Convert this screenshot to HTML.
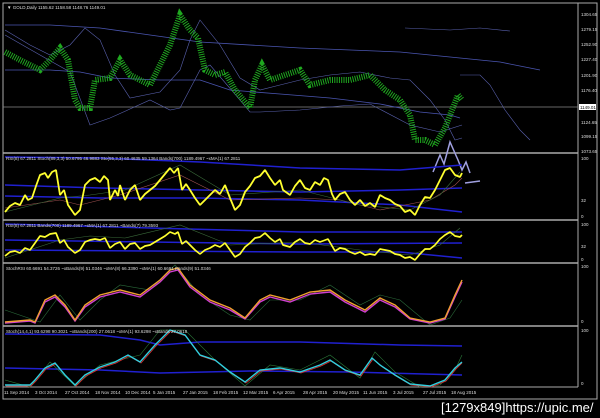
<!DOCTYPE html>
<html><head><style>
html,body{margin:0;padding:0;background:#000;}
body{width:600px;height:418px;overflow:hidden;position:relative;font-family:"Liberation Sans",sans-serif;}
svg{position:absolute;left:0;top:0}
.cap{position:absolute;left:441px;top:400px;color:#fff;font-size:13px;font-family:"Liberation Sans",sans-serif;letter-spacing:0}
</style></head><body>
<svg width="600" height="418" viewBox="0 0 600 418">
<g fill="none">
<rect x="3" y="3" width="594" height="396" stroke="#aaa" stroke-width="1"/>
<line x1="578" y1="3" x2="578" y2="387" stroke="#aaa"/>
<line x1="3" y1="153" x2="578" y2="153" stroke="#aaa" stroke-width="1.5"/>
<line x1="3" y1="220" x2="578" y2="220" stroke="#aaa" stroke-width="1.5"/>
<line x1="3" y1="263" x2="578" y2="263" stroke="#aaa" stroke-width="1.5"/>
<line x1="3" y1="326" x2="578" y2="326" stroke="#aaa" stroke-width="1.5"/>
<line x1="3" y1="387" x2="578" y2="387" stroke="#aaa"/>
<line x1="3" y1="107" x2="578" y2="107" stroke="#888" stroke-width="0.7"/>
<polyline stroke="#4a55b0" stroke-width="0.8" points="5,25 50,25 100,28 150,35 200,42 300,48 400,52 460,58 500,62 540,70"/>
<polyline stroke="#4a55b0" stroke-width="0.8" points="5,70 50,70 80,72 110,78 160,80 200,80 230,90 280,94 330,98 380,104 420,112 450,115 460,118"/>
<polyline stroke="#5a62b0" stroke-width="0.6" points="5,30 30,45 50,55 70,45 85,28 100,40 115,75 130,98 160,92 180,70 190,40 200,20 220,45 240,78 260,90 280,85 300,80 330,75 360,72 390,78 410,80 430,100 445,120 455,140 462,138"/>
<polyline stroke="#5a62b0" stroke-width="0.6" points="5,35 40,55 70,72 90,125 110,118 150,100 170,110 180,108 200,70 210,65 240,100 250,112 260,112 300,110 340,106 370,104 410,125 440,132 462,125"/>
<polyline stroke="#5a62b0" stroke-width="0.6" points="460,75 480,75 490,85 505,110 520,130 530,140"/>
<polyline stroke="#5a62b0" stroke-width="0.6" points="405,28 450,30 480,28 510,31"/>
<polyline stroke="#1fa81f" stroke-width="6" stroke-dasharray="1 1.3" points="5,52 20,60 40,70 50,60 60,48 68,60 75,100 80,108 90,108 95,80 110,78 120,60 130,75 140,80 150,85 160,65 170,45 180,15 190,30 198,38 205,70 215,75 225,72 235,90 245,102 250,108 255,80 262,65 270,80 285,75 300,70 310,85 330,80 350,80 370,75 385,90 400,100 410,115 415,140 425,140 435,145 445,128 452,110 458,95 462,100"/>
<polyline stroke="#a0a0e0" stroke-width="1.5" points="433,172 440,155 444,164 450,142 458,160 462,170 466,162 470,173"/>
<polyline stroke="#a0a0e0" stroke-width="1.5" points="465,183 480,181"/>
<polyline stroke="#2020d0" stroke-width="1.5" points="5,157 100,158 200,162 300,168 400,170 462,165"/>
<polyline stroke="#2020d0" stroke-width="1.5" points="5,185 100,188 200,190 300,192 400,190 462,188"/>
<polyline stroke="#2020d0" stroke-width="1.5" points="5,196 100,198 200,198 300,200 400,205 462,212"/>
<polyline stroke="#a05050" stroke-width="0.6" points="5,208 60,200 80,205 120,195 180,175 230,200 300,198 340,200 380,210 430,200 455,185 462,178"/>
<polyline stroke="#3a6a3a" stroke-width="0.6" points="5,212 60,198 90,195 125,190 180,165 230,195 300,190 360,205 410,210 440,195 460,172"/>
<polyline stroke="#ffff30" stroke-width="1.8" stroke-linejoin="bevel" points="5,212 10,206 15,203 20,205 25,195 28,200 32,198 36,186 40,175 45,173 48,178 52,172 56,170 60,195 64,190 68,205 75,215 80,210 85,185 90,180 95,178 100,182 104,176 108,180 110,200 115,190 118,196 120,185 125,200 130,190 135,185 140,200 145,194 150,190 155,186 160,180 165,174 170,168 174,173 178,168 182,190 186,184 190,190 195,198 200,205 205,200 210,195 215,190 220,194 225,185 230,198 235,210 240,205 245,192 250,186 255,178 260,176 265,170 270,178 275,185 280,180 283,190 290,195 295,186 300,180 305,188 310,190 315,182 320,185 324,178 328,180 332,194 335,200 340,194 345,192 350,200 355,205 360,200 365,206 370,203 375,207 380,195 385,198 390,200 395,204 400,206 405,212 410,210 415,215 420,205 425,197 430,198 435,190 440,180 445,170 450,168 455,175 460,177 462,173"/>
<polyline stroke="#2020d0" stroke-width="1.5" points="5,224 150,228 300,232 462,232"/>
<polyline stroke="#2020d0" stroke-width="1.5" points="5,240 150,242 300,244 462,243"/>
<polyline stroke="#2020d0" stroke-width="1.5" points="5,250 150,251 300,252 400,252 462,258"/>
<polyline stroke="#3a6a3a" stroke-width="0.6" points="5,258 60,240 90,236 125,238 180,225 230,245 300,242 360,250 410,255 440,245 460,228"/>
<polyline stroke="#ffff30" stroke-width="1.7" stroke-linejoin="bevel" points="5,256 10,252 15,251 20,253 25,248 30,250 35,243 40,236 45,237 50,234 56,233 60,243 64,240 68,247 75,253 80,250 85,242 90,240 95,239 100,240 105,238 110,248 115,244 120,242 125,249 130,244 135,243 140,249 145,246 150,245 155,242 160,239 165,236 170,232 175,234 178,232 182,244 186,241 190,245 195,250 200,254 205,250 210,248 215,245 220,247 225,243 230,250 235,257 240,254 245,247 250,243 255,238 260,237 265,233 270,238 275,242 280,239 283,245 290,247 295,242 300,239 305,243 310,244 315,240 320,242 328,239 335,251 340,248 345,249 350,252 355,254 360,252 365,255 370,254 375,255 380,249 385,250 390,251 395,254 400,255 405,258 410,257 415,260 420,254 425,249 430,249 435,245 440,239 445,235 450,232 455,236 460,237 462,235"/>
<polyline stroke="#2a6a3a" stroke-width="0.6" points="5,310 40,322 60,295 80,320 100,300 120,285 150,290 175,265 200,295 230,315 250,320 270,300 300,300 330,285 360,305 380,295 400,300 430,325 450,318 462,300"/>
<polyline stroke="#d040d0" stroke-width="1.4" points="5,323 30,321 35,323 45,302 55,297 65,307 75,321 85,307 100,297 120,292 140,297 160,282 170,272 178,270 190,287 210,302 230,310 245,319 260,302 270,297 290,302 310,294 330,292 345,302 355,307 365,312 380,300 395,307 410,319 430,323 445,319 455,297 462,282"/>
<polyline stroke="#f0a030" stroke-width="1.4" points="5,322 30,320 35,322 45,300 55,295 65,305 75,320 85,305 100,295 120,290 140,295 160,280 170,270 178,268 190,285 210,300 230,308 245,318 260,300 270,295 290,300 310,292 330,290 345,300 355,305 365,310 380,298 395,305 410,318 430,322 445,318 455,295 462,280"/>
<polyline stroke="#2020d0" stroke-width="1.5" points="5,334 100,335 140,340 160,345 200,342 300,342 400,345 462,346"/>
<polyline stroke="#2020d0" stroke-width="1.5" points="5,368 100,370 160,373 250,371 350,372 462,375"/>
<polyline stroke="#2a7a3a" stroke-width="0.6" points="5,380 30,387 50,362 75,386 100,365 140,355 160,330 185,330 215,360 245,386 270,365 300,370 330,355 360,378 375,352 395,372 420,387 440,385 455,370 462,355"/>
<polyline stroke="#e03030" stroke-width="0.8" points="6,386 31,386 36,381 46,369 56,364 66,376 76,386 86,376 101,368 116,363 129,356 141,363 156,346 171,331 186,336 201,356 216,361 231,373 246,383 261,371 281,369 301,373 321,366 331,361 346,371 361,376 373,359 381,366 396,376 411,385 431,387 446,381 456,369 462,363"/>
<polyline stroke="#30d0e0" stroke-width="1.4" points="5,385 30,385 35,380 45,368 55,363 65,375 75,385 85,375 100,367 115,362 128,355 140,362 155,345 170,330 185,335 200,355 215,360 230,372 245,382 260,370 280,368 300,372 320,365 330,360 345,370 360,375 372,358 380,365 395,375 410,384 430,386 445,380 455,368 462,362"/>
</g>
<g fill="#ddd" font-size="4.5" font-family="Liberation Sans, sans-serif">
<text x="7" y="9">▼ GOLD,Daily  1155.62 1158.58 1148.76 1149.01</text>
<text x="6" y="160">RSI(8) 67.2811  Stoch(89,3,3) 50.6795 46.9883  Sto(55,3,3) 60.4635 59.1364  Bands(700) 1189.4967  ~xMA(1) 67.2811</text>
<text x="6" y="227">RSI(8) 67.2811  Bands(700) 1189.4967  ~xMA(1) 67.2811  ~Bands(7) 79.3593</text>
<text x="6" y="270">StochRSI 60.6691 54.3726  ~xBands(9) 51.0346  ~xMA(8) 66.3390  ~xMA(1) 60.6691  Bands(9) 51.0346</text>
<text x="6" y="333">Stoch(14,4,1) 93.6298 90.3021  ~xBands(200) 27.0618  ~xMA(1) 93.6298  ~xBands 27.0618</text>
<text x="581" y="16">1304.65</text><text x="581" y="31">1279.15</text><text x="581" y="46">1252.90</text>
<text x="581" y="61">1227.40</text><text x="581" y="77">1201.90</text><text x="581" y="92">1176.40</text>
<text x="581" y="124">1124.65</text><text x="581" y="138">1099.15</text><text x="581" y="153">1073.65</text>
<text x="581" y="160">100</text><text x="581" y="202">32</text><text x="581" y="218">0</text>
<text x="581" y="226">100</text><text x="581" y="248">32</text><text x="581" y="261">0</text>
<text x="581" y="268">100</text><text x="581" y="323">0</text>
<text x="581" y="332">100</text><text x="581" y="385">0</text>
<text x="4" y="394">11 Sep 2014</text><text x="35" y="394">3 Oct 2014</text><text x="65" y="394">27 Oct 2014</text>
<text x="95" y="394">18 Nov 2014</text><text x="125" y="394">10 Dec 2014</text><text x="153" y="394">5 Jan 2015</text>
<text x="183" y="394">27 Jan 2015</text><text x="213" y="394">18 Feb 2015</text><text x="243" y="394">12 Mar 2015</text>
<text x="273" y="394">6 Apr 2015</text><text x="303" y="394">28 Apr 2015</text><text x="333" y="394">20 May 2015</text>
<text x="363" y="394">11 Jun 2015</text><text x="393" y="394">3 Jul 2015</text><text x="423" y="394">27 Jul 2015</text>
<text x="451" y="394">18 Aug 2015</text>
</g>
<rect x="579" y="104" width="17" height="6" fill="#fff"/>
<text x="580" y="109" font-size="4.5" fill="#000" font-family="Liberation Sans, sans-serif">1149.01</text>
</svg>
<div class="cap">[1279x849]https://upic.me/</div>
</body></html>
